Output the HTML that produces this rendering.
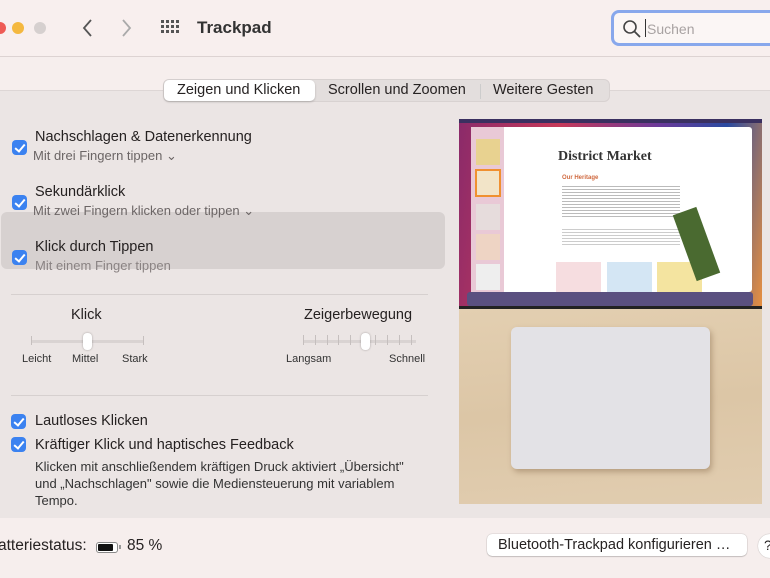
<!DOCTYPE html>
<html><head><meta charset="utf-8"><style>
*{margin:0;padding:0;box-sizing:border-box}
body{width:770px;height:578px;overflow:hidden;background:#f6eeed;font-family:"Liberation Sans",sans-serif;color:#262222;position:relative}
.abs{position:absolute}
.cb{position:absolute;width:15px;height:15px;border-radius:4px;background:#3b82f0;}
.cb:after{content:"";position:absolute;left:5px;top:2px;width:4px;height:8px;border:solid #fff;border-width:0 2px 2px 0;transform:rotate(40deg)}
.t{position:absolute;font-size:14.5px;color:#252121;white-space:nowrap}
.s{position:absolute;font-size:13px;color:#6b6565;white-space:nowrap}
.lbl{position:absolute;font-size:11px;color:#333;white-space:nowrap}
</style></head><body>
<div class="abs" style="left:0;top:0;width:770px;height:57px;background:#f8efee;border-bottom:1px solid #ddd3d2"></div>
<div class="abs" style="left:-6px;top:22px;width:12px;height:12px;border-radius:50%;background:#ee5b55"></div>
<div class="abs" style="left:12px;top:22px;width:12px;height:12px;border-radius:50%;background:#f4b83f"></div>
<div class="abs" style="left:34px;top:22px;width:12px;height:12px;border-radius:50%;background:#d6d0cf"></div>
<svg class="abs" style="left:78px;top:18px" width="60" height="20"><path d="M13 2 L6 10 L13 18" stroke="#555" stroke-width="1.8" fill="none"/><path d="M45 2 L52 10 L45 18" stroke="#aaa" stroke-width="1.8" fill="none"/></svg>
<svg class="abs" style="left:161px;top:20px" width="20" height="16" fill="#555"><g><rect x="0" y="0" width="3" height="3"/><rect x="5" y="0" width="3" height="3"/><rect x="10" y="0" width="3" height="3"/><rect x="15" y="0" width="3" height="3"/><rect x="0" y="5" width="3" height="3"/><rect x="5" y="5" width="3" height="3"/><rect x="10" y="5" width="3" height="3"/><rect x="15" y="5" width="3" height="3"/><rect x="0" y="10" width="3" height="3"/><rect x="5" y="10" width="3" height="3"/><rect x="10" y="10" width="3" height="3"/><rect x="15" y="10" width="3" height="3"/></g></svg>
<div class="abs" style="left:197px;top:18px;font-size:17px;font-weight:bold;color:#333">Trackpad</div>
<div class="abs" style="left:611px;top:10px;width:170px;height:36px;border:3px solid #88a8ec;border-radius:8px;background:#fbf6f5"></div>
<svg class="abs" style="left:622px;top:19px" width="20" height="20"><circle cx="8" cy="8" r="6" stroke="#444" stroke-width="1.6" fill="none"/><path d="M12.5 12.5 L18 18" stroke="#444" stroke-width="1.8"/></svg>
<div class="abs" style="left:645px;top:19px;width:1px;height:18px;background:#333"></div>
<div class="abs" style="left:647px;top:21px;font-size:14px;color:#a8a2a2">Suchen</div>
<div class="abs" style="left:0;top:90px;width:770px;height:428px;background:#ebe5e4;border-top:1px solid #ddd6d5"></div>
<div class="abs" style="left:163px;top:79px;width:447px;height:23px;border-radius:6px;background:#e3dedd;border:1px solid #d8d2d1"></div>
<div class="abs" style="left:164px;top:80px;width:151px;height:21px;border-radius:5px;background:#fff;box-shadow:0 1px 2px rgba(0,0,0,.2)"></div>
<div class="abs" style="left:177px;top:82px;font-size:14.5px">Zeigen und Klicken</div>
<div class="abs" style="left:328px;top:82px;font-size:14.5px">Scrollen und Zoomen</div>
<div class="abs" style="left:480px;top:84px;width:1px;height:15px;background:#ccc"></div>
<div class="abs" style="left:493px;top:82px;font-size:14.5px">Weitere Gesten</div>

<div class="abs" style="left:1px;top:212px;width:444px;height:57px;border-radius:6px;background:#d7d1d0"></div>
<div class="cb" style="left:12px;top:140px"></div>
<div class="t" style="left:35px;top:129px">Nachschlagen &amp; Datenerkennung</div>
<div class="s" style="left:33px;top:148px">Mit drei Fingern tippen ⌄</div>
<div class="cb" style="left:12px;top:195px"></div>
<div class="t" style="left:35px;top:184px">Sekundärklick</div>
<div class="s" style="left:33px;top:203px">Mit zwei Fingern klicken oder tippen ⌄</div>
<div class="cb" style="left:12px;top:250px"></div>
<div class="t" style="left:35px;top:239px">Klick durch Tippen</div>
<div class="s" style="left:35px;top:258px;color:#8a8383">Mit einem Finger tippen</div>
<div class="abs" style="left:11px;top:294px;width:417px;height:1px;background:#d6d0cf"></div>

<div class="t" style="left:71px;top:307px">Klick</div>
<div class="abs" style="left:31px;top:340px;width:113px;height:3px;background:#d9d3d2;border-radius:2px"></div>
<div class="abs" style="left:31px;top:336px;width:1px;height:9px;background:#c5bfbe"></div>
<div class="abs" style="left:143px;top:336px;width:1px;height:9px;background:#c5bfbe"></div>
<div class="abs" style="left:83px;top:333px;width:9px;height:17px;border-radius:4px;background:#fff;box-shadow:0 0 2px rgba(0,0,0,.3)"></div>
<div class="lbl" style="left:22px;top:353px">Leicht</div>
<div class="lbl" style="left:72px;top:353px">Mittel</div>
<div class="lbl" style="left:122px;top:353px">Stark</div>

<div class="t" style="left:304px;top:307px">Zeigerbewegung</div>
<div class="abs" style="left:303px;top:340px;width:113px;height:3px;background:#d9d3d2"></div>
<svg class="abs" style="left:300px;top:335px" width="120" height="12"><g stroke="#c5bfbe"><path d="M3.5 0v10M15.5 0v10M27.5 0v10M38.5 0v10M50.5 0v10M75.5 0v10M87.5 0v10M99.5 0v10M111.5 0v10"/></g></svg>
<div class="abs" style="left:361px;top:333px;width:9px;height:17px;border-radius:4px;background:#fff;box-shadow:0 0 2px rgba(0,0,0,.3)"></div>
<div class="lbl" style="left:286px;top:353px">Langsam</div>
<div class="lbl" style="left:389px;top:353px">Schnell</div>
<div class="abs" style="left:11px;top:395px;width:417px;height:1px;background:#d6d0cf"></div>

<div class="cb" style="left:11px;top:414px"></div>
<div class="t" style="left:35px;top:413px">Lautloses Klicken</div>
<div class="cb" style="left:11px;top:437px"></div>
<div class="t" style="left:35px;top:437px">Kräftiger Klick und haptisches Feedback</div>
<div class="abs" style="left:35px;top:458px;font-size:13px;line-height:17px;color:#333">Klicken mit anschließendem kräftigen Druck aktiviert „Übersicht"<br>und „Nachschlagen" sowie die Mediensteuerung mit variablem<br>Tempo.</div>

<div class="abs" style="left:459px;top:119px;width:303px;height:190px;background:linear-gradient(100deg,#8a2a6a,#c73a5a 30%,#6a3a9a 60%,#2a4aa0 80%,#e89040);overflow:hidden">
  <div class="abs" style="left:0;top:0;width:303px;height:4px;background:#3a3060"></div>
  <div class="abs" style="left:12px;top:8px;width:281px;height:165px;background:#fff;border-radius:3px"></div>
  <div class="abs" style="left:12px;top:8px;width:33px;height:165px;background:#e9c9d6"></div>
  <div class="abs" style="left:17px;top:20px;width:24px;height:26px;background:#e8d290"></div>
  <div class="abs" style="left:16px;top:50px;width:26px;height:28px;background:#f2e4c8;border:2px solid #f09030"></div>
  <div class="abs" style="left:17px;top:85px;width:24px;height:26px;background:#e6dcdc"></div>
  <div class="abs" style="left:17px;top:115px;width:24px;height:26px;background:#eed4c4"></div>
  <div class="abs" style="left:17px;top:145px;width:24px;height:26px;background:#eee"></div>
  <div class="abs" style="left:99px;top:30px;font-family:'Liberation Serif',serif;font-weight:bold;font-size:14px;color:#333">District Market</div>
  <div class="abs" style="left:103px;top:56px;font-size:6px;font-weight:bold;color:#d06a40">Our Heritage</div>
  <div class="abs" style="left:103px;top:65px;width:118px;height:34px;background:repeating-linear-gradient(#fff 0 2px,#bbb 2px 3px)"></div>
  <div class="abs" style="left:103px;top:108px;width:118px;height:18px;background:repeating-linear-gradient(#fff 0 2px,#ccc 2px 3px)"></div>
  <div class="abs" style="left:97px;top:143px;width:45px;height:30px;background:#f6dde0"></div>
  <div class="abs" style="left:148px;top:143px;width:45px;height:30px;background:#d4e6f4"></div>
  <div class="abs" style="left:198px;top:143px;width:45px;height:30px;background:#f4e4a0"></div>
  <div class="abs" style="left:225px;top:90px;width:25px;height:70px;background:#4a6a30;transform:rotate(-20deg)"></div>
  <div class="abs" style="left:8px;top:173px;width:286px;height:14px;background:#5a5080;border-radius:3px"></div>
  <div class="abs" style="left:0;top:187px;width:303px;height:3px;background:#222"></div>
</div>
<div class="abs" style="left:459px;top:309px;width:303px;height:195px;background:linear-gradient(175deg,#e3cfb1,#dcc6a6 50%,#e1cdb0)"></div>
<div class="abs" style="left:511px;top:327px;width:199px;height:142px;border-radius:6px;background:#e3e2e6;box-shadow:2px 3px 6px rgba(120,90,60,.4)"></div>

<div class="abs" style="left:-2px;top:537px;font-size:15.5px">atteriestatus:</div>
<div class="abs" style="left:96px;top:542px;width:22px;height:11px;border:1px solid #888;border-radius:3px;padding:1px;background:#fff"><div style="width:15px;height:7px;background:#111;border-radius:1px"></div></div>
<div class="abs" style="left:119px;top:545px;width:2px;height:4px;background:#999"></div>
<div class="abs" style="left:127px;top:537px;font-size:15.5px">85 %</div>
<div class="abs" style="left:487px;top:534px;width:260px;height:22px;border-radius:5px;background:#fff;box-shadow:0 0 1px rgba(0,0,0,.4),0 1px 1px rgba(0,0,0,.15)"></div>
<div class="abs" style="left:498px;top:537px;font-size:14.5px">Bluetooth-Trackpad konfigurieren …</div>
<div class="abs" style="left:758px;top:534px;width:24px;height:24px;border-radius:50%;background:#fff;box-shadow:0 0 1px rgba(0,0,0,.4);font-size:14px;padding:3px 0 0 6px">?</div>
</body></html>
